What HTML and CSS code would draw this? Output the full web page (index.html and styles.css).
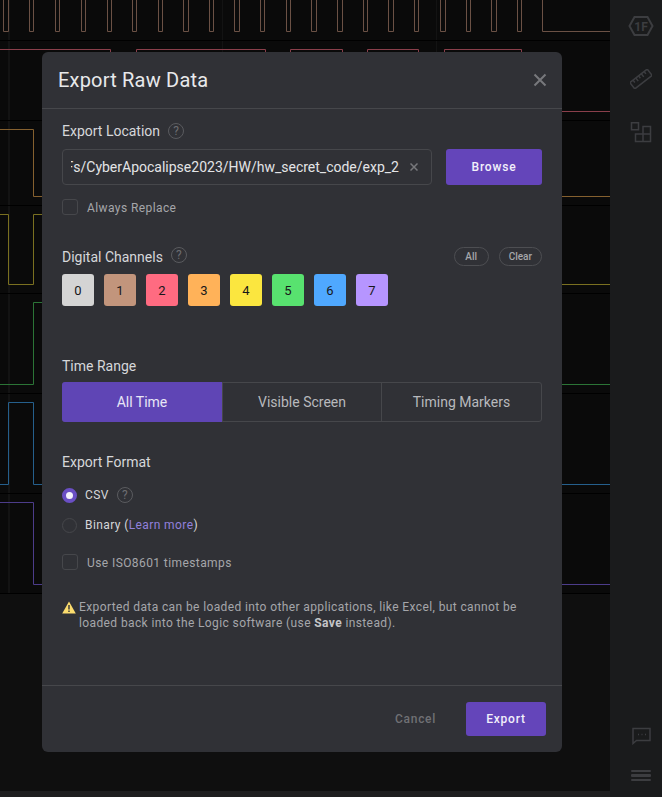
FILE: index.html
```html
<!DOCTYPE html>
<html>
	<head>
		<title>Export Raw Data</title>
		<link rel="stylesheet" href="styles.css">
	</head>
	<body>
		<div id="app">
			<!--capture traces-->
			<div id="traces">
				<svg class="wave" width="610" height="797" viewBox="0 0 610 797">
					<rect x="0" y="593" width="610" height="198" fill="#0f0f0f"/>
					<rect x="0" y="791" width="610" height="6" fill="#1e1e1f"/>
					<g fill="#131313">
						<rect x="8" y="0" width="2" height="593"/>
						<rect x="222" y="0" width="1" height="593"/>
						<rect x="436" y="0" width="1" height="593"/>
					</g>
					<g stroke="#000" stroke-width="1">
						<path d="M0 40.5H610M0 120.5H610M0 205.5H610M0 293.5H610M0 393.5H610M0 493.5H610M0 593.5H610"/>
					</g>
					<g fill="none" stroke-width="1">
						<path stroke="#6b5145" d="M3.5 0V31.5H8.5V0M29.5 0V31.5H33.5V0M55.5 0V31.5H59.5V0M81.5 0V31.5H85.5V0M107.5 0V31.5H111.5V0M132.5 0V31.5H136.5V0M158.5 0V31.5H162.5V0M183.5 0V31.5H188.5V0M209.5 0V31.5H213.5V0M234.5 0V31.5H239.5V0M260.5 0V31.5H264.5V0M286.5 0V31.5H290.5V0M311.5 0V31.5H316.5V0M337.5 0V31.5H342.5V0M363.5 0V31.5H367.5V0M388.5 0V31.5H393.5V0M414.5 0V31.5H418.5V0M440.5 0V31.5H445.5V0M466.5 0V31.5H470.5V0M491.5 0V31.5H496.5V0M517.5 0V31.5H521.5V0M542.5 0V31.5H610"/>
						<path stroke="#8a3f4b" d="M0 49.5H110.5V60M136.5 60V49.5H265.5V60M290.5 60V49.5H342.5V60M367.5 60V49.5H418.5V60M444.5 60V49.5H521.5V111.5H610"/>
						<path stroke="#85602f" d="M0 129.5H33.5V196.5H610"/>
						<path stroke="#7a7020" d="M0 214.5H8.5V284.5H33.5V214.5H42M562 284.5H610"/>
						<path stroke="#2b7436" d="M0 384.5H33.5V302.5H42M562 384.5H610"/>
						<path stroke="#255f8c" d="M0 484.5H8.5V402.5H33.5V484.5H42M562 484.5H610"/>
						<path stroke="#4c3c8a" d="M0 502.5H33.5V584.5H42M562 584.5H610"/>
					</g>
				</svg>

				<!--export dialog-->
				<div id="dialog">
					<div class="dialogHead">
						<h1>Export Raw Data</h1>
						<svg class="closeIcon" width="14" height="14" viewBox="0 0 14 14">
							<path d="M1.5 1.5L12.5 12.5M12.5 1.5L1.5 12.5"/>
						</svg>
					</div>

					<div class="dialogBody">
						<div class="labelRow">
							<span class="label">Export Location</span>
							<span class="help">?</span>
						</div>
						<div class="locationRow">
							<div class="pathInput">
								<div class="pathClip"><span>/home/user/Documents/CTFs/CyberApocalipse2023/HW/hw_secret_code/exp_2</span></div>
								<svg class="clearIcon" width="8" height="8" viewBox="0 0 8 8">
									<path d="M.5 .5L7.5 7.5M7.5 .5L.5 7.5"/>
								</svg>
							</div>
							<button type="button" class="primary browse">Browse</button>
						</div>
						<div class="checkRow replace">
							<span class="check"></span>
							<span class="checkText">Always Replace</span>
						</div>

						<div class="labelRow channelsHead">
							<span class="label">Digital Channels</span>
							<span class="help raised">?</span>
							<span class="pills">
								<span class="pill">All</span>
								<span class="pill">Clear</span>
							</span>
						</div>
						<div class="channels">
							<span class="chan c0">0</span>
							<span class="chan c1">1</span>
							<span class="chan c2">2</span>
							<span class="chan c3">3</span>
							<span class="chan c4">4</span>
							<span class="chan c5">5</span>
							<span class="chan c6">6</span>
							<span class="chan c7">7</span>
						</div>

						<div class="labelRow timeHead">
							<span class="label">Time Range</span>
						</div>
						<div class="segments">
							<span class="seg active">All Time</span>
							<span class="seg">Visible Screen</span>
							<span class="seg">Timing Markers</span>
						</div>

						<div class="labelRow formatHead">
							<span class="label">Export Format</span>
						</div>
						<div class="radioRow csv">
							<span class="radio on"></span>
							<span class="radioText">CSV</span>
							<span class="help">?</span>
						</div>
						<div class="radioRow binary">
							<span class="radio"></span>
							<span class="radioText">Binary (<a href="#">Learn more</a>)</span>
						</div>
						<div class="checkRow iso">
							<span class="check"></span>
							<span class="checkText">Use ISO8601 timestamps</span>
						</div>

						<div class="notice">
							<svg class="warnIcon" width="14" height="13" viewBox="0 0 14 13">
								<path d="M7 .5L13.8 12.5H.2Z" fill="#fbdc6e"/>
								<path d="M6.3 4H7.7V8.500H6.3ZM6.3 9.500H7.7V11H6.3Z" fill="#2f3035"/>
							</svg>
							<p>Exported data can be loaded into other applications, like Excel, but cannot be loaded back into the Logic software (use <b>Save</b> instead).</p>
						</div>
					</div>

					<div class="dialogFoot">
						<button type="button" class="cancel">Cancel</button>
						<button type="button" class="primary export">Export</button>
					</div>
				</div>
				<!--/export dialog-->
			</div>

			<!--right sidebar-->
			<div id="sidebar">
				<div class="sideTop">
					<svg class="sideIcon" width="26" height="20" viewBox="0 0 26 20">
						<path d="M6.500 1H19.500L24.500 10L19.500 19H6.500L1.500 10Z"/>
						<text x="13" y="14.500" text-anchor="middle">1F</text>
					</svg>
					<svg class="sideIcon" width="22" height="20" viewBox="0 0 22 20">
						<g transform="rotate(-38 11 10)">
							<rect x="0" y="6" width="22" height="8"/>
							<path class="thin" d="M4 6V9M7.500 6V10M11 6V9M14.500 6V10M18 6V9"/>
						</g>
					</svg>
					<svg class="sideIcon" width="22" height="22" viewBox="0 0 22 22">
						<rect x="1.500" y=".75" width="7" height="7"/>
						<path class="thin" d="M5.500 19.500V12H13V4.500H20.500V19.500ZM13 12V19.500M13 12H20.500"/>
					</svg>
				</div>
				<div class="sideBottom">
					<svg class="sideIcon" width="20" height="18" viewBox="0 0 20 18">
						<path class="thin" d="M2 1.500H19V13.500H5.500L2 16.500Z"/>
						<path class="thin" d="M7 7.500H8M10.500 7.500H11.500M14 7.500H15"/>
					</svg>
					<div class="burger">
						<span></span>
						<span></span>
						<span></span>
					</div>
				</div>
			</div>
		</div>
	</body>
</html>
```

FILE: styles.css
```css
html, body{
	margin:0;
	height:100%;
	overflow:hidden;
}
body{
	font-family:Roboto, sans-serif;
	background:#0a0a0a;
	color:#d6d7da;
}
#app{
	display:flex;
	height:797px;
}
#traces{
	position:relative;
	width:610px;
	flex:none;
}
.wave{
	display:block;
}
#sidebar{
	flex:1;
	background:#1a1b1c;
	display:flex;
	flex-direction:column;
	justify-content:space-between;
	align-items:center;
	padding:16px 0 16px 10px;
}
.sideTop{
	display:flex;
	flex-direction:column;
	align-items:center;
	gap:33px;
}
.sideBottom{
	display:flex;
	flex-direction:column;
	align-items:center;
	gap:25px;
}
.sideIcon{
	display:block;
	fill:none;
	stroke:#3c3d40;
	stroke-width:2;
}
.sideIcon text{
	font-family:Roboto, sans-serif;
	font-size:12px;
	font-weight:700;
	fill:#3c3d40;
	stroke:none;
}
.sideIcon rect, .sideIcon .thin{
	stroke-width:1.5;
}
.burger{
	display:flex;
	flex-direction:column;
	gap:2px;
	width:20px;
}
.burger span{
	height:2.5px;
	background:#3c3d40;
	border-radius:1px;
}

/* dialog */
#dialog{
	position:absolute;
	left:42px;
	top:52px;
	width:520px;
	height:700px;
	display:flex;
	flex-direction:column;
	background:#303136;
	border-radius:6px;
}
.dialogHead{
	display:flex;
	justify-content:space-between;
	align-items:center;
	height:56px;
	padding:0 15px 0 16px;
	border-bottom:1px solid #46474b;
	flex:none;
}
h1{
	margin:0;
	font-size:20px;
	font-weight:400;
	letter-spacing:.2px;
	color:#e8e9eb;
}
.closeIcon{
	fill:none;
	stroke:#77787c;
	stroke-width:2;
}
.dialogBody{
	flex:1;
	padding:12px 20px 0;
}
.labelRow{
	display:flex;
	align-items:center;
	height:20px;
}
.label{
	font-size:14px;
	color:#d6d7da;
}
.help{
	display:flex;
	align-items:center;
	justify-content:center;
	box-sizing:border-box;
	width:16px;
	height:16px;
	margin-left:8px;
	border:1px solid #5a5b5f;
	border-radius:50%;
	font-size:12px;
	color:#6c6d71;
}
.help.raised{
	margin-top:-4px;
}
.locationRow{
	display:flex;
	gap:14px;
	margin-top:8px;
}
.pathInput{
	display:flex;
	align-items:center;
	box-sizing:border-box;
	width:370px;
	height:36px;
	padding:0 9px 0 8px;
	border:1px solid #46474b;
	border-radius:4px;
}
.pathClip{
	display:flex;
	justify-content:flex-end;
	flex:1;
	overflow:hidden;
	margin-right:11px;
	font-size:14px;
	color:#e3e4e6;
	white-space:nowrap;
}
.clearIcon{
	flex:none;
	margin-right:4px;
	fill:none;
	stroke:#77787c;
	stroke-width:1.5;
}
button{
	font-family:Roboto, sans-serif;
	border:none;
	cursor:pointer;
}
.primary{
	background:#6445ba;
	color:#f2f0fa;
	border-radius:3px;
	font-size:12px;
	font-weight:500;
	letter-spacing:.8px;
}
.browse{
	width:96px;
	height:36px;
}
.checkRow{
	display:flex;
	align-items:center;
	gap:9px;
	height:16px;
}
.replace{
	margin-top:14px;
}
.iso{
	margin-top:19px;
}
.check{
	box-sizing:border-box;
	width:16px;
	height:16px;
	border:1px solid #46474b;
	border-radius:3px;
}
.checkText{
	padding-top:1px;
	font-size:12px;
	letter-spacing:.41px;
	color:#a5a6aa;
}
.channelsHead{
	margin-top:32px;
}
.pills{
	display:flex;
	gap:10px;
	margin-left:auto;
	align-self:flex-start;
}
.pill{
	display:flex;
	align-items:center;
	justify-content:center;
	min-width:35px;
	height:19px;
	box-sizing:border-box;
	padding:0 9px;
	border:1px solid #4d4e52;
	border-radius:10px;
	font-size:10px;
	font-weight:500;
	color:#a5a6aa;
}
.channels{
	display:flex;
	gap:10px;
	margin-top:7px;
}
.chan{
	display:flex;
	align-items:center;
	justify-content:center;
	width:32px;
	height:32px;
	border-radius:3px;
	font-size:13px;
	color:#17171a;
}
.c0{background:#d4d4d4;}
.c1{background:#c2957c;}
.c2{background:#ff6b81;}
.c3{background:#ffb259;}
.c4{background:#fbe63f;}
.c5{background:#58e26f;}
.c6{background:#4fa8ff;}
.c7{background:#b695ff;}
.timeHead{
	margin-top:50px;
}
.segments{
	display:grid;
	grid-template-columns:159px 159px 160px;
	height:40px;
	margin-top:6px;
	box-sizing:border-box;
	border:1px solid #46474b;
	border-radius:3px;
}
.seg{
	display:flex;
	align-items:center;
	justify-content:center;
	border-left:1px solid #46474b;
	font-size:14px;
	color:#b8b9bd;
}
.seg:first-child{
	border-left:none;
}
.seg.active{
	margin:-1px 0 -1px -1px;
	background:#5f45b5;
	border-radius:3px 0 0 3px;
	color:#e8e5f6;
}
.formatHead{
	margin-top:30px;
}
.radioRow{
	display:flex;
	align-items:center;
	height:20px;
}
.csv{
	margin-top:13px;
}
.binary{
	margin-top:10px;
}
.radio{
	box-sizing:border-box;
	width:15px;
	height:15px;
	margin-right:8px;
	border:1px solid #46474b;
	border-radius:50%;
}
.radio.on{
	border:4px solid #6a4fc4;
	background:#f4f2fb;
}
.radioText{
	font-size:12px;
	letter-spacing:.4px;
	color:#d6d7da;
}
.radioText a{
	color:#9180dc;
	text-decoration:none;
}
.notice{
	display:flex;
	margin-top:29px;
}
.warnIcon{
	flex:none;
	margin:2px 3px 0 0;
}
.notice p{
	margin:0;
	width:450px;
	font-size:12px;
	line-height:16px;
	letter-spacing:.39px;
	color:#a5a6aa;
}
.notice b{
	font-weight:700;
	color:#c4c5c8;
}
.dialogFoot{
	display:flex;
	justify-content:flex-end;
	align-items:flex-start;
	height:67px;
	box-sizing:border-box;
	padding:16px 16px 0;
	border-top:1px solid #46474b;
	flex:none;
}
.cancel{
	height:34px;
	margin-right:24px;
	background:none;
	font-size:12px;
	font-weight:500;
	letter-spacing:.7px;
	color:#6f7074;
}
.export{
	width:80px;
	height:34px;
}
```
